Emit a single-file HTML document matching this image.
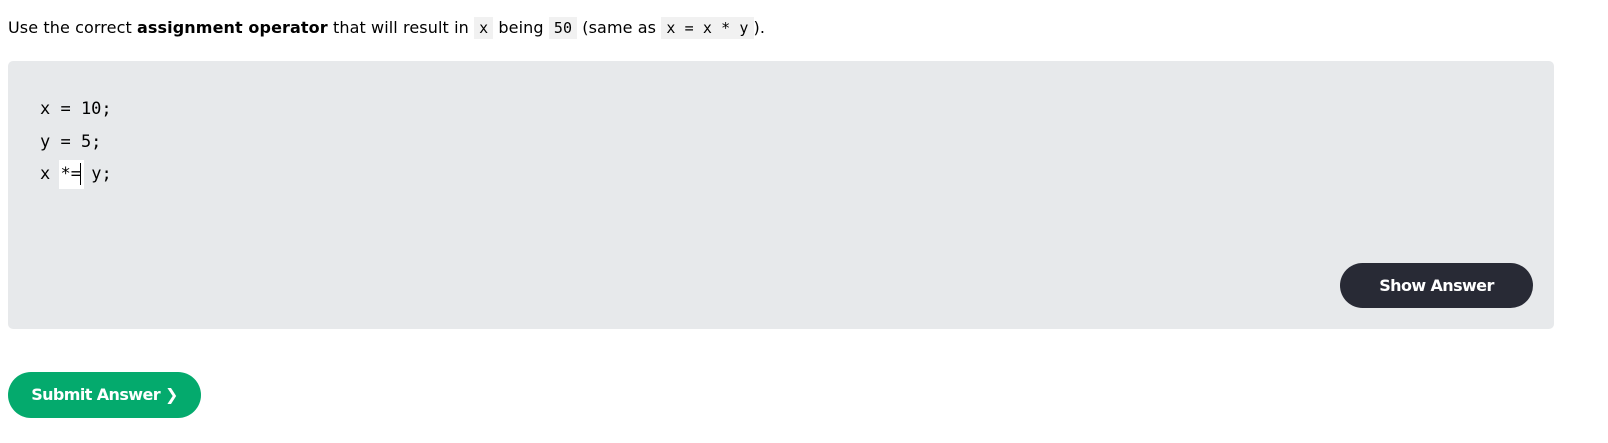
<!DOCTYPE html>
<html><head><style>
body{margin:0;background:#fff;width:1608px;height:443px;overflow:hidden;font-family:Verdana,"DejaVu Sans",sans-serif;}
.q{position:absolute;left:8px;top:18px;font-size:16px;color:#000;white-space:nowrap;letter-spacing:0.1px}
.q code{font-family:"DejaVu Sans Mono","Liberation Mono",monospace;font-size:15px;background:#f1f1f1;padding:2px 5px;}
.box{position:absolute;left:8px;top:61px;width:1546px;height:268px;background:#e7e9eb;border-radius:5px;}
.code{position:absolute;left:40px;font-family:"DejaVu Sans Mono","Liberation Mono",monospace;font-size:17px;color:#000;white-space:pre;}
.inp{position:absolute;left:59px;top:160px;width:25px;height:29px;background:#fff;}
.btn{position:absolute;color:#fff;font-family:"DejaVu Sans",sans-serif;font-weight:bold;font-size:16px;letter-spacing:-0.6px;text-align:center;border-radius:23px;}
</style></head><body>
<div class="q">Use the correct <b>assignment operator</b> that will result in <code>x</code> being <code>50</code> (same as <code>x = x * y</code>).</div>
<div class="box"></div>
<div class="code" style="top:99px">x = 10;</div>
<div class="code" style="top:132px">y = 5;</div>
<div class="inp"></div>
<div class="code" style="top:164px">x <span style="position:relative">*=<span style="position:absolute;left:20px;top:-1px;width:1px;height:22px;background:#000"></span></span> y;</div>
<div class="btn" style="left:1340px;top:263px;width:193px;height:45px;line-height:45px;background:#282a35">Show Answer</div>
<div class="btn" style="left:8px;top:372px;width:193px;height:46px;line-height:46px;background:#04aa6d">Submit Answer ❯</div>
</body></html>
